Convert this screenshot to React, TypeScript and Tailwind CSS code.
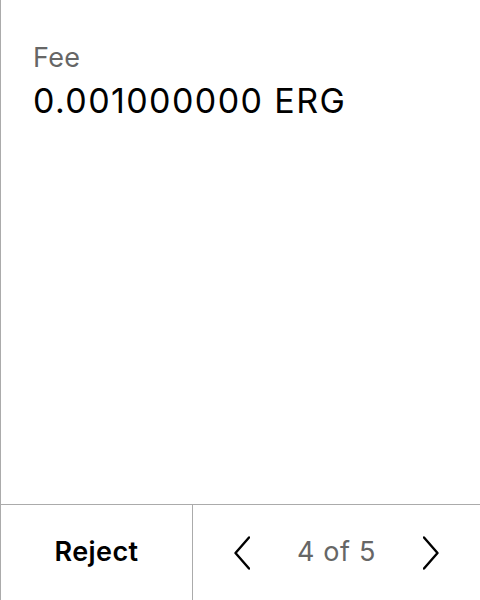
export default function App() {
  return (
    <div
      className="h-[600px] w-[480px] flex flex-col bg-white border-l border-[#ababab]"
      style={{ fontFamily: "Inter, 'Noto Sans', sans-serif" }}
    >
      <div className="flex-1 pl-[32px] pt-[42px]">
        <div className="text-[27px] leading-[32px] tracking-[0.3px] text-[#666666]">Fee</div>
        <div className="text-[34px] leading-[44px] tracking-[1.4px] text-black mt-[5px]">0.001000000 ERG</div>
      </div>
      <div className="h-[96px] flex border-t border-[#ababab]">
        <div className="w-[192px] flex items-center justify-center border-r border-[#ababab]">
          <span className="text-[27px] font-semibold tracking-[0.4px] text-black">Reject</span>
        </div>
        <div className="flex-1 flex items-center justify-center gap-[47px]">
          <svg width="16" height="34" viewBox="0 0 16 34" fill="none" stroke="black" strokeWidth="2.4" strokeLinecap="round" strokeLinejoin="round">
            <path d="M15 1.5 L1.5 17 L15 32.5" />
          </svg>
          <span className="text-[27px] tracking-[0.6px] text-[#666666]">4 of 5</span>
          <svg width="16" height="34" viewBox="0 0 16 34" fill="none" stroke="black" strokeWidth="2.4" strokeLinecap="round" strokeLinejoin="round">
            <path d="M1 1.5 L14.5 17 L1 32.5" />
          </svg>
        </div>
      </div>
    </div>
  );
}
